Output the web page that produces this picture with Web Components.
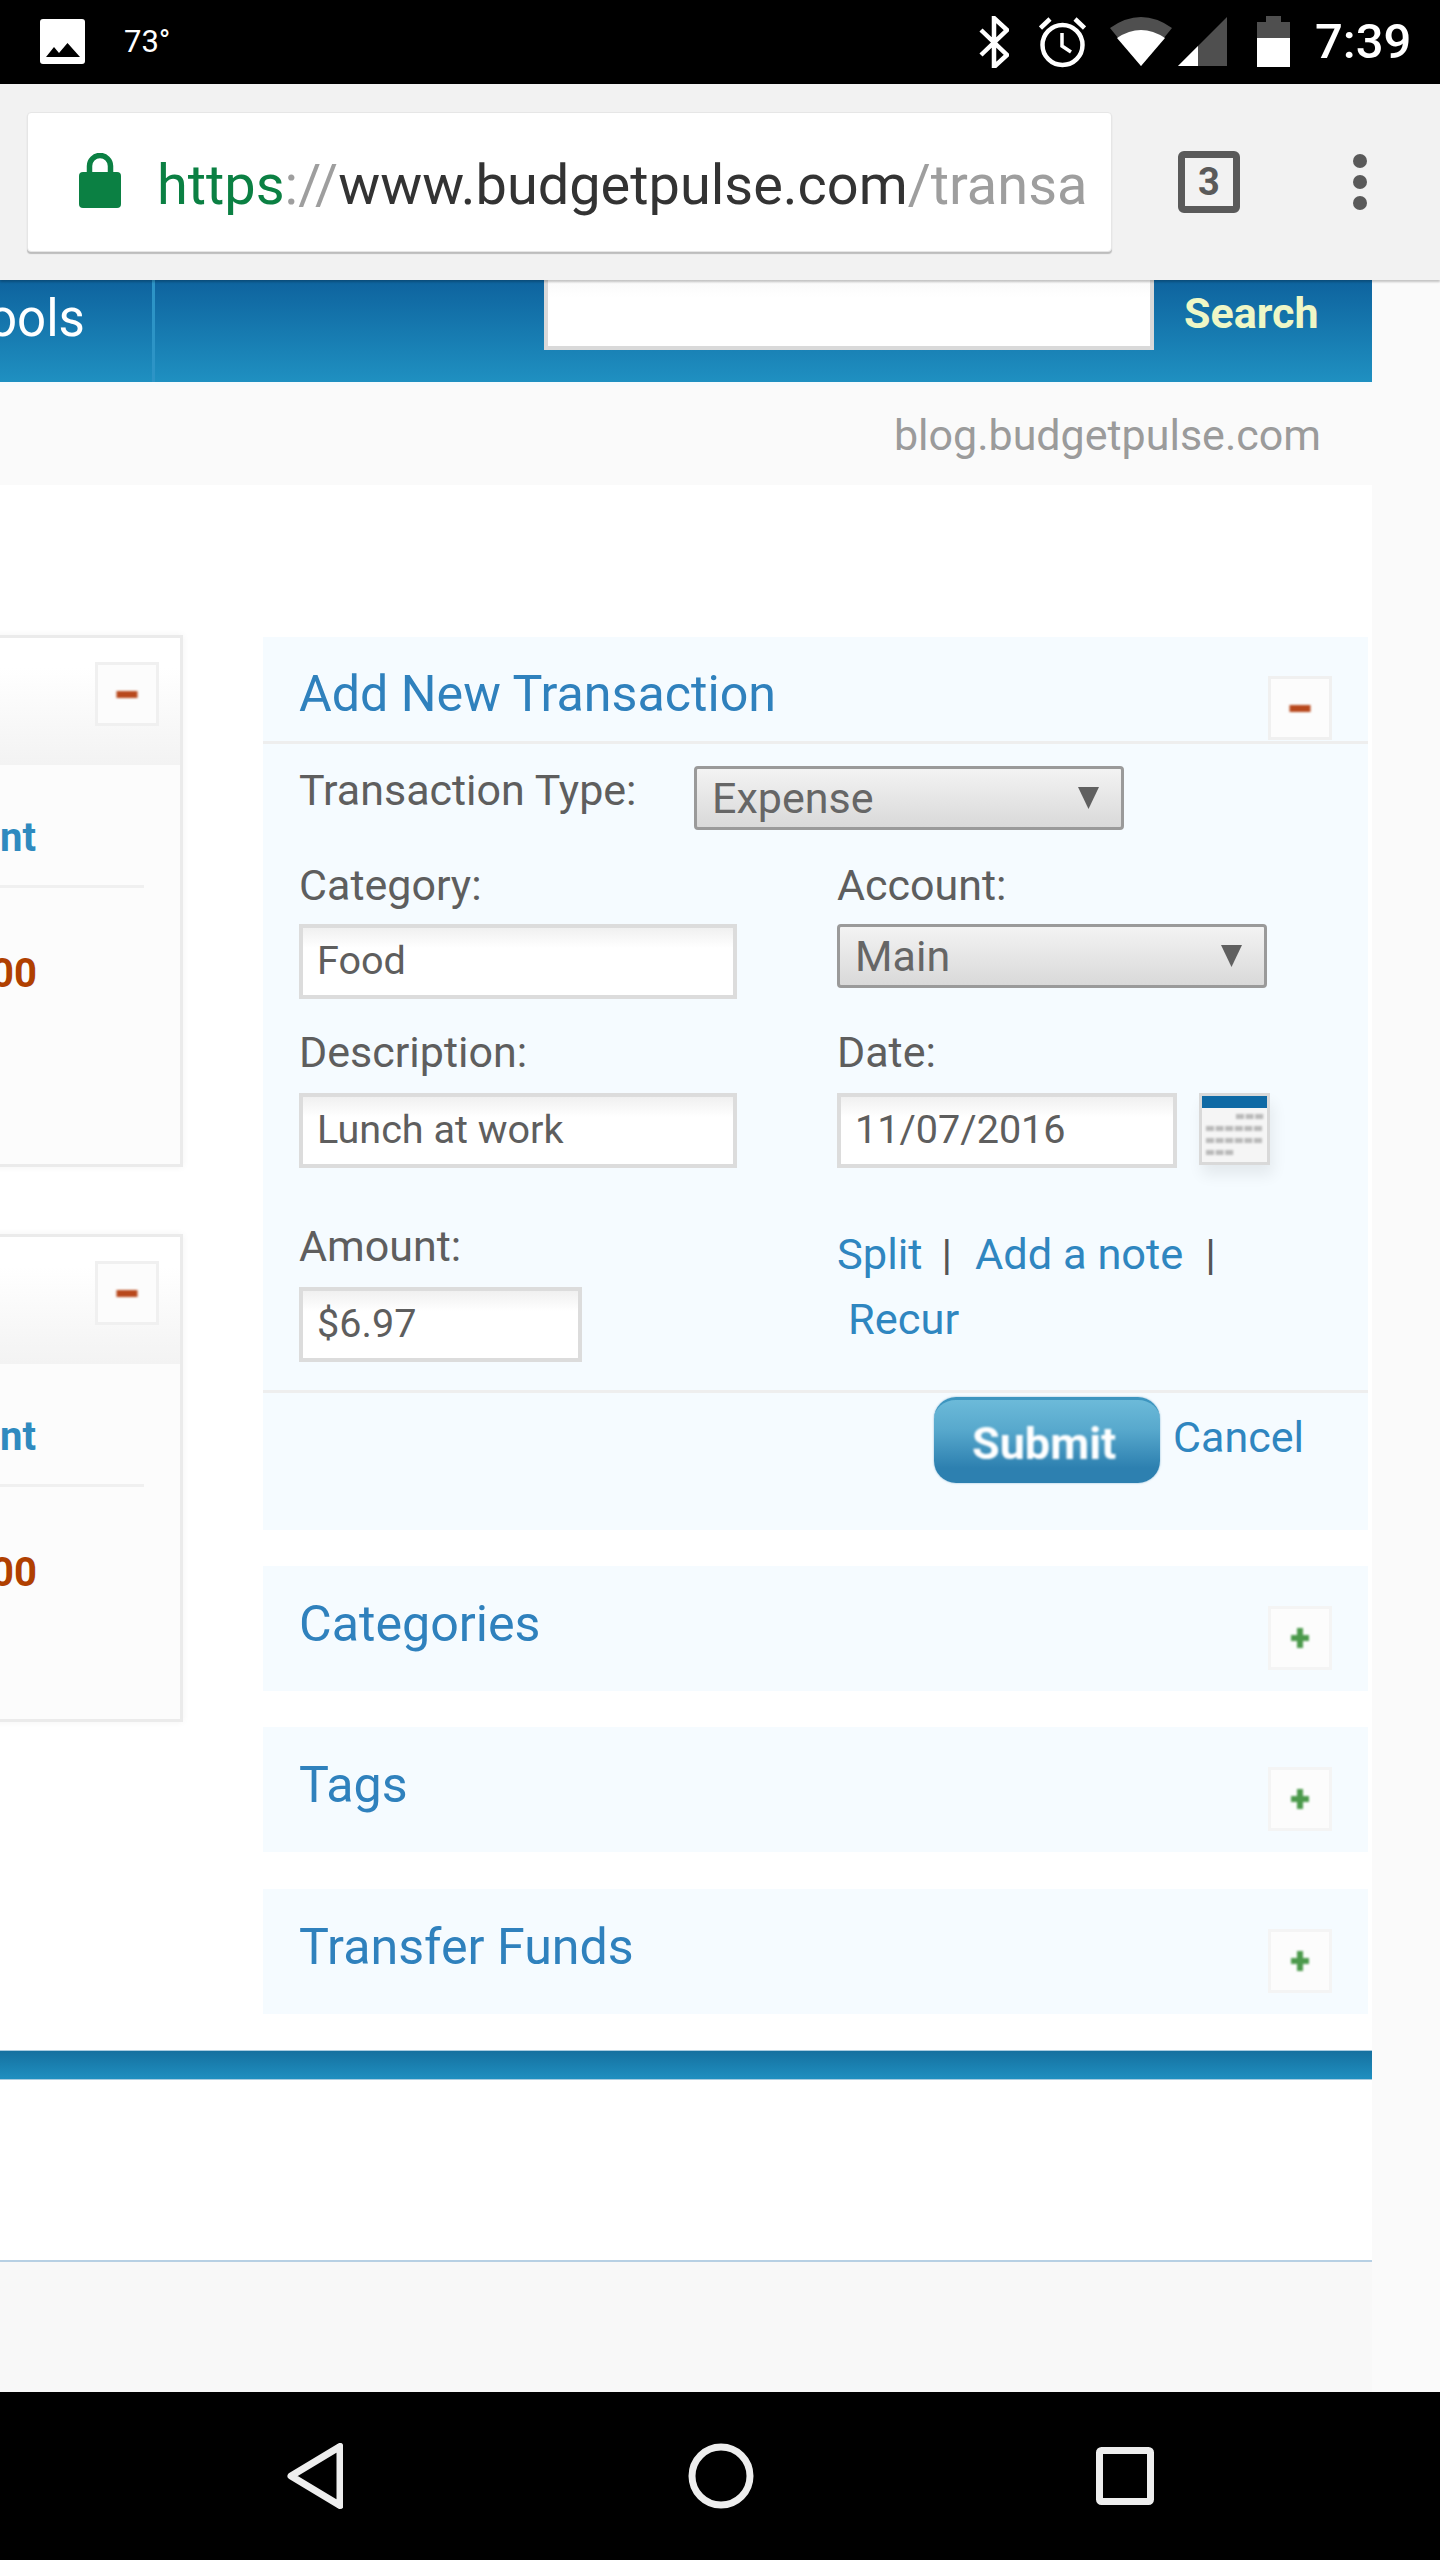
<!DOCTYPE html>
<html>
<head>
<meta charset="utf-8">
<title>BudgetPulse</title>
<style>
  html, body { margin: 0; padding: 0; }
  body {
    width: 1440px;
    height: 2560px;
    overflow: hidden;
    background: #fafafa;
    font-family: Roboto, "Liberation Sans", sans-serif;
    display: flex;
    flex-direction: column;
  }
</style>
</head>
<body>
<status-bar></status-bar>
<browser-bar></browser-bar>
<page-view></page-view>
<nav-bar></nav-bar>

<script>
class Base extends HTMLElement {
  constructor() {
    super();
    this.attachShadow({ mode: 'open' });
  }
  connectedCallback() {
    this.shadowRoot.innerHTML = this.render();
  }
}

class StatusBar extends Base {
  render() {
    return `
      <style>
        :host { display: flex; align-items: center; height: 84px; background: #000; color: #fff; flex: none; }
        svg { display: block; flex: none; height: 52px; }
        .temp { font-size: 31px; margin-left: 39px; line-height: 52px; }
        .time { font-size: 49px; font-weight: 500; margin-left: 25px; margin-right: 31px; line-height: 52px; width: 94px; white-space: nowrap; }
      </style>
      <svg width="45" viewBox="0 0 45 52" style="margin-left:40px">
        <rect x="0" y="3" width="45" height="45" rx="3" fill="#fff"/>
        <path d="M6 41 L14 31 L19 37 L27.5 27 L40 41 Z" fill="#000"/>
      </svg>
      <span class="temp">73°</span>
      <svg width="30" viewBox="0 0 30 52" style="margin-left:auto">
        <path d="M2 14 L28 39 L15 51 V2 L28 14 L2 39" fill="none" stroke="#fff" stroke-width="4.5"/>
      </svg>
      <svg width="47" viewBox="0 0 47 52" style="margin-left:30px">
        <circle cx="23.5" cy="29" r="20" fill="none" stroke="#fff" stroke-width="4.5"/>
        <path d="M23 17 V30 L32 36" fill="none" stroke="#fff" stroke-width="3.5"/>
        <path d="M1.5 12 L11 3 M45.5 12 L36 3" fill="none" stroke="#fff" stroke-width="4.5"/>
      </svg>
      <svg width="62" viewBox="0 0 62 52" style="margin-left:24px">
        <path d="M31 50 L0 12 Q31 -10 62 12 Z" fill="#4f4f4f"/>
        <path d="M31 50 L7 22 Q31 6 55 22 Z" fill="#fff"/>
      </svg>
      <svg width="49" viewBox="0 0 49 52" style="margin-left:6px">
        <path d="M0 50 L49 1 V50 Z" fill="#4f4f4f"/>
        <path d="M0 50 L20 30 V50 Z" fill="#fff"/>
      </svg>
      <svg width="33" viewBox="0 0 33 52" style="margin-left:30px">
        <path d="M9 0 H24 V6 H33 V22 H0 V6 H9 Z" fill="#4f4f4f"/>
        <rect x="0" y="22" width="33" height="29" fill="#fff"/>
      </svg>
      <span class="time">7:39</span>
    `;
  }
}

class BrowserBar extends Base {
  render() {
    return `
      <style>
        :host {
          display: flex; align-items: center; height: 196px; flex: none; box-sizing: border-box;
          background: #f2f2f2; box-shadow: 0 2px 2px rgba(0,0,0,.22); position: relative; z-index: 2;
        }
        .url {
          display: flex; align-items: center; box-sizing: border-box;
          width: 1085px; height: 140px; margin-left: 27px; padding-left: 51px;
          background: #fff; border: 1px solid #e6e6e6; border-radius: 4px;
          box-shadow: 0 2px 1px #bdbdbd; overflow: hidden;
        }
        .url svg { flex: none; margin-top: -3px; }
        .txt { margin-left: 36px; padding-top: 5px; font-size: 55.9px; line-height: 70px; white-space: nowrap; color: #333; }
        .sec { color: #0b8043; }
        .dim { color: #9e9e9e; }
        .tabs {
          box-sizing: border-box; width: 62px; height: 62px; margin-left: 66px; flex: none;
          border: 7px solid #5a5a5a; border-radius: 6px; display: flex; align-items: center; justify-content: center;
          font-size: 38px; font-weight: 700; color: #5a5a5a;
        }
        .dots { margin-left: 113px; display: flex; flex-direction: column; gap: 7px; }
        .dots i { display: block; width: 14px; height: 14px; border-radius: 50%; background: #5a5a5a; }
      </style>
      <div class="url">
        <svg width="42" height="55" viewBox="0 0 42 55">
          <path d="M10.5 20 V13 a10.5 10.5 0 0 1 21 0 V20" fill="none" stroke="#0b8043" stroke-width="5.5"/>
          <rect x="0" y="19" width="42" height="36" rx="4" fill="#0b8043"/>
        </svg>
        <span class="txt"><span class="sec">https</span><span class="dim">://</span>www.budgetpulse.com<span class="dim">/transa</span></span>
      </div>
      <div class="tabs">3</div>
      <div class="dots"><i></i><i></i><i></i></div>
    `;
  }
}

class PageView extends Base {
  render() {
    return `
      <style>
        :host { display: flex; flex-direction: column; width: 1372px; height: 2112px; flex: none; overflow: hidden; }
      </style>
      <site-header></site-header>
      <blog-strip></blog-strip>
      <main-area></main-area>
      <site-footer></site-footer>
    `;
  }
}

class SiteHeader extends Base {
  render() {
    return `
      <style>
        :host {
          display: flex; height: 102px; flex: none;
          background: linear-gradient(#0e639e, #1f90c1);
        }
        .tools {
          width: 155px; box-sizing: border-box; border-right: 3px solid #2d94c6;
          padding-top: 9px; overflow: hidden; color: #fff; font-size: 51px; line-height: 60px;
        }
        .tools span { display: block; margin-left: -12px; white-space: nowrap; }
        .box {
          width: 610px; height: 70px; margin-left: 389px; box-sizing: border-box;
          background: linear-gradient(#fafafa, #fff 18px);
          border: 4px solid #d9d9d9; border-top: 0;
        }
        .go { margin-left: 30px; padding-top: 8px; font-size: 43px; line-height: 50px; font-weight: 700; color: #eef7c6; }
      </style>
      <div class="tools"><span>ools</span></div>
      <div class="box"></div>
      <div class="go">Search</div>
    `;
  }
}

class BlogStrip extends Base {
  render() {
    return `
      <style>
        :host {
          display: block; height: 103px; box-sizing: border-box; flex: none;
          background: #fafafa; border-top: 4px solid #f6fafc;
          padding: 24px 51px 0 0; text-align: right;
          font-size: 43px; line-height: 50px; color: #9b9b9b;
        }
      </style>
      blog.budgetpulse.com
    `;
  }
}

class MainArea extends Base {
  render() {
    return `
      <style>
        :host {
          display: grid; grid-template-columns: 183px 1105px; column-gap: 80px;
          height: 1565px; flex: none; box-sizing: border-box;
          background: #fff; padding-top: 150px;
        }
        .left { display: flex; flex-direction: column; gap: 67px; }
        .right { display: flex; flex-direction: column; gap: 36px; padding-top: 2px; }
        .last { margin-top: 1px; }
      </style>
      <div class="left">
        <side-card style="height:532px"></side-card>
        <side-card style="height:488px"></side-card>
      </div>
      <div class="right">
        <collapse-panel open>Add New Transaction<txn-form slot="body"></txn-form></collapse-panel>
        <collapse-panel>Categories</collapse-panel>
        <collapse-panel>Tags</collapse-panel>
        <collapse-panel class="last">Transfer Funds</collapse-panel>
      </div>
    `;
  }
}

class SideCard extends Base {
  render() {
    return `
      <style>
        :host {
          display: block; box-sizing: border-box; width: 283px; margin-left: -100px;
          background: #fcfcfc; border: 3px solid #ebebeb; box-shadow: 0 0 7px rgba(0,0,0,.05);
        }
        header {
          height: 127px; box-sizing: border-box; padding: 24px 21px 0 0;
          display: flex; justify-content: flex-end;
          background: linear-gradient(#fff, #fff 30px, #f3f3f3);
        }
        .body { padding: 48px 0 0 0; text-align: right; font-weight: 700; font-size: 40px; line-height: 50px; }
        .link { color: #2f8abf; padding-right: 144px; }
        hr { border: 0; height: 3px; background: #f0f0f0; margin: 22px 36px 0 0; }
        .val { color: #b04000; padding-right: 143px; margin-top: 61px; }
      </style>
      <header><toggle-btn kind="minus"></toggle-btn></header>
      <div class="body">
        <div class="link">nt</div>
        <hr>
        <div class="val">00</div>
      </div>
    `;
  }
}

class CollapsePanel extends Base {
  render() {
    const open = this.hasAttribute('open');
    return `
      <style>
        :host { display: block; background: #f5fbff; ${open ? '' : 'height: 125px;'} }
        header {
          display: flex; justify-content: space-between; box-sizing: border-box;
          padding: 0 36px;
          ${open ? 'height: 107px; border-bottom: 3px solid #eeeeee;' : ''}
        }
        h2 { margin: 0; font-weight: 400; font-size: 50.2px; line-height: 60px; color: #2f81bd; padding-top: ${open ? 27 : 28}px; }
        toggle-btn { margin-top: ${open ? 39 : 40}px; }
      </style>
      <header>
        <h2><slot></slot></h2>
        <toggle-btn kind="${open ? 'minus' : 'plus'}"></toggle-btn>
      </header>
      <slot name="body"></slot>
    `;
  }
}

class ToggleBtn extends Base {
  render() {
    const plus = this.getAttribute('kind') === 'plus';
    return `
      <style>
        :host {
          display: flex; align-items: center; justify-content: center; flex: none;
          width: 64px; height: 64px; box-sizing: border-box;
          background: #fcfcfc; border: 3px solid ${plus ? '#f4f4f4' : '#f0f0f0'};
        }
        svg { display: block; filter: blur(.8px); }
      </style>
      ${plus
        ? `<svg width="22" height="24" viewBox="0 0 22 24"><path d="M8 2 H14 V9 H20 V15 H14 V22 H8 V15 H2 V9 H8 Z" fill="#4c9a4c"/></svg>`
        : `<svg width="24" height="9" viewBox="0 0 24 9"><rect x="1.5" y="1" width="21" height="7" fill="#b8481c"/></svg>`}
    `;
  }
}

class FieldLabel extends Base {
  render() {
    return `
      <style>
        :host { display: block; font-size: 43px; line-height: 50px; color: #5e5e5e; white-space: nowrap; }
      </style>
      <slot></slot>
    `;
  }
}

class TextField extends Base {
  render() {
    return `
      <style>
        :host {
          display: flex; align-items: center; box-sizing: border-box; height: 75px;
          padding: 0 0 3px 14px; border: 4px solid #dcdcdc;
          background: linear-gradient(#f0f0f0, #fff 20px);
          font-size: 39.6px; color: #5e5e5e; white-space: nowrap;
        }
      </style>
      <slot></slot>
    `;
  }
}

class SelectField extends Base {
  render() {
    return `
      <style>
        :host {
          display: flex; align-items: center; justify-content: space-between; box-sizing: border-box;
          width: 430px; height: 64px; padding: 0 22px 0 15px;
          border: 3px solid #9a9a9a; border-radius: 4px;
          background: linear-gradient(#f3f3f3, #d9d9d9);
          font-size: 43px; color: #666;
        }
        svg { display: block; flex: none; }
      </style>
      <slot></slot>
      <svg width="21" height="22" viewBox="0 0 21 22"><path d="M0 0 H21 L10.5 22 Z" fill="#606060"/></svg>
    `;
  }
}

class CalendarIcon extends Base {
  render() {
    let cells = '';
    const row = (y, from, n) => {
      for (let i = 0; i < n; i++) cells += `<rect x="${from + i * 9.6}" y="${y}" width="8" height="5" fill="#b9b9b9"/>`;
    };
    row(21, 37, 3);
    row(33, 7, 6);
    row(45, 7, 6);
    row(57, 7, 3);
    return `
      <style>
        :host { display: block; flex: none; width: 71px; height: 72px; box-shadow: 3px 10px 14px rgba(0,0,0,.07); }
        svg { display: block; }
        g { filter: blur(1px); }
      </style>
      <svg width="71" height="72" viewBox="0 0 71 72">
        <rect x="1.5" y="1.5" width="68" height="69" fill="#f5f5f5" stroke="#d9d9d9" stroke-width="3"/>
        <rect x="3" y="3" width="65" height="12" fill="#0f6aa5"/>
        <g>${cells}</g>
      </svg>
    `;
  }
}

class TxnForm extends Base {
  render() {
    return `
      <style>
        :host { display: block; }
        .type { display: flex; padding: 22px 0 0 36px; height: 64px; }
        .type field-label { width: 395px; flex: none; margin-top: -1px; }
        .grid {
          display: grid; grid-template-columns: 538px 1fr; row-gap: 28px;
          padding: 29px 0 28px 36px; border-bottom: 3px solid #eeeeee;
        }
        .cell field-label { padding-top: 1px; margin-bottom: 14px; }
        .cell.mid field-label { padding-top: 0; margin-bottom: 16px; }
        .cell.amount field-label { padding-top: 0; margin-bottom: 16px; }
        .date { display: flex; gap: 22px; }
        .date text-field { width: 340px; }
        .amount { margin-top: 25px; }
        .links { margin-top: 26px; font-size: 43.4px; line-height: 65px; color: #2f86c0; white-space: nowrap; }
        .links b { font-weight: 400; color: #555; margin: 0 23px 0 19px; }
        .links b + span + b { margin-left: 22px; }
        .recur { padding-left: 11px; }
        .foot {
          display: flex; justify-content: flex-end; gap: 13px; box-sizing: border-box;
          height: 137px; padding: 4px 64px 0 0;
        }
        .cancel { font-size: 43px; line-height: 50px; color: #2f86c0; margin-top: 15px; }
      </style>
      <div class="type">
        <field-label>Transaction Type:</field-label>
        <select-field>Expense</select-field>
      </div>
      <div class="grid">
        <div class="cell">
          <field-label>Category:</field-label>
          <text-field style="width:438px">Food</text-field>
        </div>
        <div class="cell">
          <field-label>Account:</field-label>
          <select-field>Main</select-field>
        </div>
        <div class="cell mid">
          <field-label>Description:</field-label>
          <text-field style="width:438px">Lunch at work</text-field>
        </div>
        <div class="cell mid">
          <field-label>Date:</field-label>
          <div class="date">
            <text-field>11/07/2016</text-field>
            <calendar-icon></calendar-icon>
          </div>
        </div>
        <div class="cell amount">
          <field-label>Amount:</field-label>
          <text-field style="width:283px">$6.97</text-field>
        </div>
        <div class="cell links">
          <div>Split<b>|</b><span>Add a note</span><b>|</b></div>
          <div class="recur">Recur</div>
        </div>
      </div>
      <div class="foot">
        <submit-btn>Submit</submit-btn>
        <div class="cancel">Cancel</div>
      </div>
    `;
  }
}

class SubmitBtn extends Base {
  render() {
    return `
      <style>
        :host {
          display: flex; align-items: center; justify-content: center; box-sizing: border-box;
          width: 226px; height: 86px; border-radius: 22px;
          border-top: 3px solid #3d95bf; padding-right: 6px;
          background: linear-gradient(#6cbad9, #58a9cd 35%, #2d80b0 82%);
          box-shadow: 0 0 2px rgba(45,128,176,.6);
          font-size: 45px; font-weight: 700;
        }
        span { color: #fff; filter: blur(1px); padding-top: 4px; }
      </style>
      <span><slot></slot></span>
    `;
  }
}

class SiteFooter extends Base {
  render() {
    return `
      <style>
        :host { display: flex; flex-direction: column; flex: 1; background: #f8f8f8; }
        .bar {
          height: 28px; flex: none;
          background: linear-gradient(#15709f, #1f8fc0);
          border-top: 1px solid #a9cbdf; border-bottom: 1px solid #a9cbdf;
        }
        .gap { height: 180px; flex: none; background: #fff; border-bottom: 2px solid #b7d0e4; }
      </style>
      <div class="bar"></div>
      <div class="gap"></div>
    `;
  }
}

class NavBar extends Base {
  render() {
    return `
      <style>
        :host { display: flex; align-items: center; height: 168px; flex: none; background: #000; }
        svg { display: block; flex: none; }
      </style>
      <svg width="56" height="66" viewBox="0 0 56 66" style="margin-left:287px">
        <path d="M53 3.5 V62.5 L4 33 Z" fill="none" stroke="#eeeeee" stroke-width="7" stroke-linejoin="round"/>
      </svg>
      <svg width="66" height="66" viewBox="0 0 66 66" style="margin-left:345px">
        <circle cx="33" cy="33" r="29" fill="none" stroke="#eeeeee" stroke-width="7"/>
      </svg>
      <svg width="58" height="58" viewBox="0 0 58 58" style="margin-left:342px">
        <rect x="3.5" y="3.5" width="51" height="51" rx="2" fill="none" stroke="#eeeeee" stroke-width="7"/>
      </svg>
    `;
  }
}

customElements.define('status-bar', StatusBar);
customElements.define('browser-bar', BrowserBar);
customElements.define('page-view', PageView);
customElements.define('site-header', SiteHeader);
customElements.define('blog-strip', BlogStrip);
customElements.define('main-area', MainArea);
customElements.define('side-card', SideCard);
customElements.define('collapse-panel', CollapsePanel);
customElements.define('toggle-btn', ToggleBtn);
customElements.define('field-label', FieldLabel);
customElements.define('text-field', TextField);
customElements.define('select-field', SelectField);
customElements.define('calendar-icon', CalendarIcon);
customElements.define('txn-form', TxnForm);
customElements.define('submit-btn', SubmitBtn);
customElements.define('site-footer', SiteFooter);
customElements.define('nav-bar', NavBar);
</script>
</body>
</html>
